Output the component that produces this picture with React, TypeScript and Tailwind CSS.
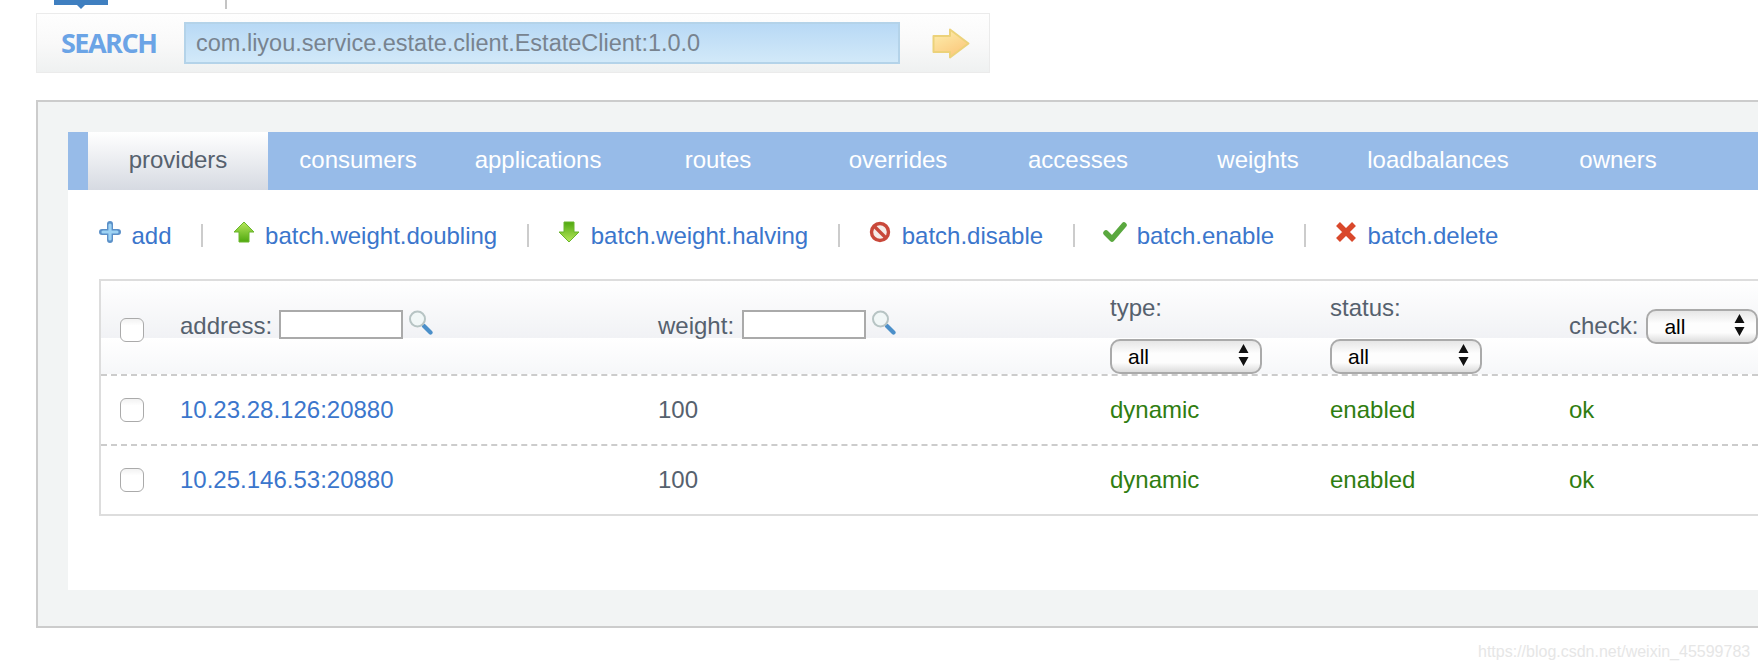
import React from "react";

const tabs = ["providers", "consumers", "applications", "routes", "overrides", "accesses", "weights", "loadbalances", "owners"];

function ArrowIcon({ down = false }: { down?: boolean }) {
  const id = down ? "downGreen" : "upGreen";
  return (
    <svg width="22" height="22" viewBox="0 0 22 22">
      <defs>
        <linearGradient id={id} x1="0" y1="0" x2="0" y2="1">
          <stop offset="0" stopColor={down ? "#4fa80f" : "#b8e85c"} />
          <stop offset="1" stopColor={down ? "#b8e85c" : "#4fa80f"} />
        </linearGradient>
      </defs>
      <polygon
        points={down ? "11,21 21,11 16,11 16,1 6,1 6,11 1,11" : "11,1 21,11 16,11 16,21 6,21 6,11 1,11"}
        fill={`url(#${id})`}
        stroke="#6ab62c"
        strokeWidth="1"
        strokeLinejoin="round"
      />
    </svg>
  );
}

function PlusIcon() {
  return (
    <svg width="22" height="22" viewBox="0 0 22 22">
      <path d="M11 3v16M3 11h16" stroke="#5b90c8" strokeWidth="6" strokeLinecap="round" />
      <path d="M11 4v14M4 11h14" stroke="#9ed3f4" strokeWidth="3.2" strokeLinecap="round" />
    </svg>
  );
}

function DisableIcon() {
  return (
    <svg width="22" height="22" viewBox="0 0 22 22">
      <circle cx="11" cy="11" r="8.5" fill="#f6ece8" stroke="#c9483a" strokeWidth="3.4" />
      <path d="M5.5 5.5l11 11" stroke="#c9483a" strokeWidth="3.4" />
    </svg>
  );
}

function CheckIcon() {
  return (
    <svg width="24" height="22" viewBox="0 0 24 22" className="-mx-px">
      <path d="M3 12l6 6L21 4" fill="none" stroke="#5aa83f" strokeWidth="5.5" strokeLinecap="round" strokeLinejoin="round" />
    </svg>
  );
}

function DeleteIcon() {
  return (
    <svg width="22" height="22" viewBox="0 0 22 22">
      <path d="M3 3l16 16M19 3L3 19" stroke="#d9482b" strokeWidth="5.5" />
    </svg>
  );
}

function LensIcon() {
  return (
    <svg width="26" height="25" viewBox="0 0 26 25" className="shrink-0">
      <path d="M16 16l6.5 6.5" stroke="#4b8fc9" strokeWidth="4.2" strokeLinecap="round" />
      <circle cx="9.5" cy="9" r="7.5" fill="#f1f7f7" stroke="#b7c4c4" strokeWidth="2" />
    </svg>
  );
}

function Filter({ label, gap }: { label: string; gap: string }) {
  return (
    <div className="flex items-start pt-[29px]">
      <span className={`${gap} mt-[2px] leading-[28px] text-[#56616e]`}>{label}</span>
      <input className="h-[29px] w-[124px] border-2 border-[#aaa] bg-white" />
      <span className="ml-[5px]">
        <LensIcon />
      </span>
    </div>
  );
}

function AllSelect({ className = "" }: { className?: string }) {
  return (
    <div className={`relative h-[35px] shrink-0 ${className}`}>
      <select className="h-full w-full appearance-none rounded-[10px] border-2 border-[#aaa] bg-[linear-gradient(#e6e6e6,#fdfdfd_40%,#fdfdfd_70%,#dcdcdc)] pl-[16px] pt-[1px] text-[21px] leading-none text-black outline-none">
        <option>all</option>
      </select>
      <svg width="11" height="24" viewBox="0 0 11 24" className="absolute right-[13px] top-[5px]">
        <path d="M5.5 1l5 9H.5zM5.5 23l-5-9h10z" fill="#111" />
      </svg>
    </div>
  );
}

function StackFilter({ label }: { label: string }) {
  return (
    <div className="pt-[13px]">
      <div className="h-[28px] leading-[28px] text-[#56616e]">{label}</div>
      <AllSelect className="mt-[16px] w-[152px]" />
    </div>
  );
}

function Box() {
  return <input type="checkbox" className="h-6 w-6 appearance-none rounded-md border border-[#aaa] bg-[linear-gradient(#f2f2f2,#fff_30%)]" />;
}

function Row({ addr, last = false }: { addr: string; last?: boolean }) {
  return (
    <div
      className={`grid grid-cols-[79px_478px_452px_220px_1fr] items-center ${
        last ? "h-[68px]" : "h-[70px] border-b-2 border-dashed border-[#ccc]"
      }`}
    >
      <div className="flex pl-[19px]">
        <Box />
      </div>
      <a className="text-[#3b76cc]">{addr}</a>
      <span className="text-[#56616e]">100</span>
      <span className="text-[#2f7d10]">dynamic</span>
      <div className="grid grid-cols-[239px_1fr] text-[#2f7d10]">
        <span>enabled</span>
        <span>ok</span>
      </div>
    </div>
  );
}

function Sep() {
  return <span className="-mt-[2px] h-[23px] w-[2px] bg-[#ccc]" />;
}

function Action({ icon, label }: { icon: React.ReactNode; label: string }) {
  return (
    <div className="flex items-center gap-[10.5px]">
      <span className="-mt-[9px] flex">{icon}</span>
      <a className="text-[#3b76cc]">{label}</a>
    </div>
  );
}

export default function App() {
  return (
    <div className="relative h-[670px] w-[1758px] overflow-hidden bg-white font-['Liberation_Sans',Arial,sans-serif] text-[24px]">
      <div className="flex h-[13px] items-start pl-[54px]">
        <div className="relative h-[5px] w-[54px] bg-[#3f7fc0]">
          <span className="absolute left-[23px] top-[5px] h-0 w-0 border-x-[4px] border-t-[4px] border-x-transparent border-t-[#3f7fc0]" />
        </div>
        <span className="ml-[117px] h-[9px] w-[2px] bg-[#c4c4c4]" />
      </div>

      <div className="ml-[36px] flex h-[60px] w-[954px] items-center border border-[#ebebeb] bg-[linear-gradient(#fefefe,#f9f9f9_50%,#eff1f1)] pl-[24px]">
        <span className="w-[123px] font-['Open_Sans',sans-serif] text-[27px] font-bold tracking-[-1.5px] text-[#6ba4e6]">SEARCH</span>
        <input
          readOnly
          value="com.liyou.service.estate.client.EstateClient:1.0.0"
          className="h-[42px] w-[716px] border-2 border-[#b4d3e9] bg-[linear-gradient(#b8d9f5,#d2e9f9)] pl-[10px] text-[23.5px] text-[#78838f] outline-none"
        />
        <svg width="38" height="31" viewBox="0 0 38 31" className="ml-[32px]">
          <defs>
            <linearGradient id="goArrow" x1="0" y1="0" x2="0.6" y2="1">
              <stop offset="0" stopColor="#fdf0b0" />
              <stop offset="1" stopColor="#fbc87c" />
            </linearGradient>
          </defs>
          <polygon points="1.5,8 18,8 18,1.5 36.5,15.5 18,29.5 18,24 1.5,24" fill="url(#goArrow)" stroke="#ecd27a" strokeWidth="2" strokeLinejoin="round" />
        </svg>
      </div>

      <div className="ml-[36px] mt-[27px] h-[528px] border-2 border-r-0 border-[#ccc] bg-[#f2f4f4] pl-[30px] pt-[30px]">
        <div className="h-[458px] bg-white">
          <div className="flex h-[58px] bg-[#97bbe8] pl-[20px]">
            {tabs.map((t, i) => (
              <div
                key={t}
                className={`flex w-[180px] items-center justify-center pb-[2px] ${
                  i === 0 ? "bg-[linear-gradient(#fff,#d6dae2)] text-[#56616e]" : "text-white"
                }`}
              >
                {t}
              </div>
            ))}
          </div>

          <div className="flex h-[89px] items-center gap-[29.5px] pl-[31px] pt-[3px]">
            <Action icon={<PlusIcon />} label="add" />
            <Sep />
            <Action icon={<ArrowIcon />} label="batch.weight.doubling" />
            <Sep />
            <Action icon={<ArrowIcon down />} label="batch.weight.halving" />
            <Sep />
            <Action icon={<DisableIcon />} label="batch.disable" />
            <Sep />
            <Action icon={<CheckIcon />} label="batch.enable" />
            <Sep />
            <Action icon={<DeleteIcon />} label="batch.delete" />
          </div>

          <div className="ml-[31px] border-2 border-r-0 border-[#ddd]">
            <div className="grid h-[95px] grid-cols-[79px_478px_452px_220px_1fr] border-b-2 border-dashed border-[#ccc] bg-[linear-gradient(#fff,#f1f2f5_57px,#fff_57px,#f6f7f9)]">
              <div className="pl-[19px] pt-[35px]">
                <Box />
              </div>
              <Filter label="address:" gap="mr-[7px]" />
              <Filter label="weight:" gap="mr-[8px]" />
              <StackFilter label="type:" />
              <div className="grid grid-cols-[239px_1fr]">
                <StackFilter label="status:" />
                <div className="flex items-start pt-[27px]">
                  <span className="mr-[8px] leading-[35px] text-[#56616e]">check:</span>
                  <AllSelect className="w-[112px]" />
                </div>
              </div>
            </div>
            <Row addr="10.23.28.126:20880" />
            <Row addr="10.25.146.53:20880" last />
          </div>
        </div>
      </div>

      <span className="absolute left-[1478px] top-[640px] text-[16px] text-[#e6e6e6]">https://blog.csdn.net/weixin_45599783</span>
    </div>
  );
}
